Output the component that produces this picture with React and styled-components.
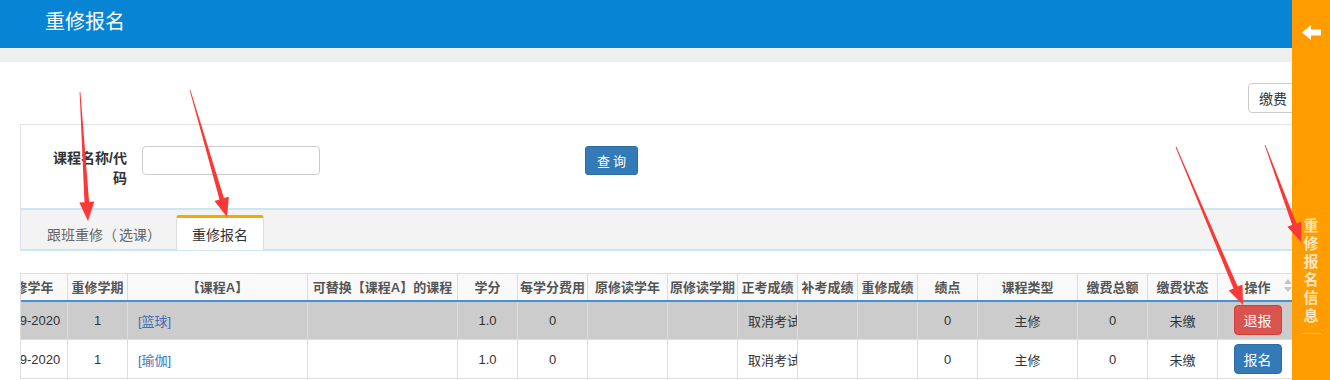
import React, { useLayoutEffect, useRef } from "react";
import styled, { createGlobalStyle } from "styled-components";

const FONT = `"Liberation Sans", "Noto Sans CJK SC", sans-serif`;

const GlobalStyle = createGlobalStyle`
  html, body { margin: 0; padding: 0; background: #fff; overflow: hidden; }
  body { font-family: ${FONT}; color: #333; font-size: 13px; }
  * { box-sizing: border-box; }
`;

const Page = styled.div`
  position: relative;
  width: 1330px;
  height: 380px;
  overflow: hidden;
`;

const TopBar = styled.header`
  height: 48px;
  background: #0784d4;
  padding-left: 45px;
`;

const Title = styled.h1`
  margin: 0;
  font-size: 20px;
  font-weight: normal;
  line-height: 45px;
  color: #fff;
`;

const SubBar = styled.div`
  height: 14px;
  background: #efefef;
`;

const Content = styled.main`
  padding: 0 20px;
`;

const Toolbar = styled.div`
  display: flex;
  justify-content: flex-end;
  padding: 21px 12px 0 0;
  margin-bottom: 11px;
`;

const PayButton = styled.button`
  height: 30px;
  padding: 0 10px;
  border: 1px solid #ccc;
  border-radius: 4px;
  background: #fff;
  color: #333;
  font-family: ${FONT};
  font-size: 14px;
`;

const SearchPanel = styled.section`
  height: 84px;
  border: 1px solid #e3e3e3;
  border-bottom: none;
  padding: 21px 0 0 0;
  display: flex;
  align-items: flex-start;
`;

const FieldLabel = styled.label`
  width: 76px;
  margin-left: 30px;
  padding-top: 2px;
  text-align: right;
  font-size: 14px;
  font-weight: bold;
  line-height: 20px;
  color: #333;
`;

const TextInput = styled.input`
  width: 178px;
  height: 29px;
  margin-left: 15px;
  border: 1px solid #ccc;
  border-radius: 4px;
  background: #fff;
`;

const QueryButton = styled.button`
  width: 53px;
  height: 29px;
  margin-left: 265px;
  border: 1px solid #2e6da4;
  border-radius: 3px;
  background: #337ab7;
  color: #fff;
  font-family: ${FONT};
  font-size: 13px;
  letter-spacing: 3px;
  padding: 0 0 0 3px;
`;

const TabBar = styled.nav`
  height: 43px;
  background: #f3f3f3;
  border-top: 2px solid #cbe7f1;
  border-bottom: 2px solid #cbe7f1;
  border-left: 1px solid #dde;
  display: flex;
  align-items: flex-end;
  padding-left: 10px;
  margin-bottom: -2px;
`;

const Tab = styled.div`
  height: 35px;
  padding: 0 ${(p) => (p.$active ? "15px" : "12px")} 0 15px;
  display: flex;
  align-items: center;
  font-size: 14px;
  color: ${(p) => (p.$active ? "#333" : "#666")};
  background: ${(p) => (p.$active ? "#fff" : "transparent")};
  border: 1px solid ${(p) => (p.$active ? "#ddd" : "transparent")};
  border-top: 3px solid ${(p) => (p.$active ? "#f0ab00" : "transparent")};
  border-bottom: none;
  border-radius: 3px 3px 0 0;
  position: relative;
  top: 1px;
`;

const Paren = styled.span`
  letter-spacing: 2px;
`;

const TableWrap = styled.div`
  margin-top: 24px;
  overflow: hidden;
  border-left: 1px solid #ddd;
`;

const Table = styled.table`
  border-collapse: collapse;
  table-layout: fixed;
  width: 1330px;
`;

const HeadCell = styled.th`
  position: relative;
  height: 27px;
  padding: 0 2px;
  background: #f9f9f9;
  border: 1px solid #ddd;
  border-bottom: 2px solid #4791d6;
  color: #555;
  font-size: 13px;
  font-weight: bold;
  white-space: nowrap;
  overflow: hidden;
  text-align: center;
  ${(p) => (p.$blank ? "border-right: none; border-top-color: transparent;" : "")}
`;

const Row = styled.tr`
  background: ${(p) => (p.$selected ? "#cccccc" : "#fff")};
`;

const Cell = styled.td`
  height: 39px;
  padding: 0 10px;
  border: 1px solid #ddd;
  font-size: 13px;
  color: #333;
  white-space: nowrap;
  overflow: hidden;
  text-align: ${(p) => (p.$left ? "left" : "center")};
`;

const CourseLink = styled.a`
  color: #3f6fb5;
  text-decoration: none;
  font-size: 13px;
`;

const ActionButton = styled.button`
  width: 48px;
  height: 30px;
  padding: 0;
  border-radius: 4px;
  border: 1px solid ${(p) => (p.$danger ? "#d43f3a" : "#2e6da4")};
  background: ${(p) => (p.$danger ? "#d9534f" : "#337ab7")};
  color: #fff;
  font-family: ${FONT};
  font-size: 14px;
  vertical-align: middle;
`;

const SortIcon = styled.span`
  position: absolute;
  right: 5px;
  top: 5px;
  display: flex;
  flex-direction: column;
  gap: 3px;
  &::before,
  &::after {
    content: "";
    width: 0;
    height: 0;
    border-left: 4px solid transparent;
    border-right: 4px solid transparent;
  }
  &::before { border-bottom: 5px solid #c4c4c4; }
  &::after { border-top: 5px solid #c4c4c4; }
`;

const SideTab = styled.aside`
  position: absolute;
  top: 0;
  right: 0;
  width: 38px;
  height: 380px;
  background: #ff9c00;
  display: flex;
  flex-direction: column;
  align-items: center;
  z-index: 5;
`;

const BackIcon = styled.svg`
  margin-top: 25px;
  display: block;
`;

const SideText = styled.div`
  margin-top: 176px;
  width: 16px;
  font-family: "Noto Sans CJK SC", sans-serif;
  font-size: 15px;
  font-weight: bold;
  line-height: 18px;
  color: #ffe6bf;
  text-align: center;
  word-break: break-all;
`;

const SideRule = styled.div`
  margin-top: 9px;
  width: 20px;
  height: 1px;
  background: #ffc250;
`;

const Annotations = styled.svg`
  position: absolute;
  left: 0;
  top: 0;
  pointer-events: none;
  z-index: 10;
`;

const columns = [
  { label: "重修学年", w: 80 },
  { label: "重修学期", w: 60 },
  { label: "【课程A】", w: 180 },
  { label: "可替换【课程A】的课程", w: 150 },
  { label: "学分", w: 60 },
  { label: "每学分费用", w: 70 },
  { label: "原修读学年", w: 80 },
  { label: "原修读学期", w: 70 },
  { label: "正考成绩", w: 60 },
  { label: "补考成绩", w: 60 },
  { label: "重修成绩", w: 60 },
  { label: "绩点", w: 60 },
  { label: "课程类型", w: 100 },
  { label: "缴费总额", w: 70 },
  { label: "缴费状态", w: 70 },
  { label: "操作", w: 80 },
  { label: "", w: 20 },
];

const rows = [
  { year: "2019-2020", term: "1", course: "[篮球]", credit: "1.0", fee: "0", exam: "取消考试", gpa: "0", type: "主修", total: "0", status: "未缴", action: "退报", danger: true, selected: true },
  { year: "2019-2020", term: "1", course: "[瑜伽]", credit: "1.0", fee: "0", exam: "取消考试", gpa: "0", type: "主修", total: "0", status: "未缴", action: "报名", danger: false, selected: false },
];

const arrows = [
  { x1: 80, y1: 92, x2: 88, y2: 221 },
  { x1: 190, y1: 90, x2: 227, y2: 217 },
  { x1: 1176, y1: 147, x2: 1243, y2: 305 },
  { x1: 1265, y1: 145, x2: 1301, y2: 242 },
];

function arrowPoints({ x1, y1, x2, y2 }) {
  const dx = x2 - x1;
  const dy = y2 - y1;
  const L = Math.hypot(dx, dy);
  const ux = dx / L;
  const uy = dy / L;
  const nx = -uy;
  const ny = ux;
  const bx = x2 - ux * 19;
  const by = y2 - uy * 19;
  const p = (x, y) => `${x.toFixed(1)},${y.toFixed(1)}`;
  return [
    p(x1 + nx * 0.4, y1 + ny * 0.4),
    p(bx + nx * 2.3, by + ny * 2.3),
    p(bx + nx * 7.5, by + ny * 7.5),
    p(x2, y2),
    p(bx - nx * 7.5, by - ny * 7.5),
    p(bx - nx * 2.3, by - ny * 2.3),
    p(x1 - nx * 0.4, y1 - ny * 0.4),
  ].join(" ");
}

export default function App() {
  const wrapRef = useRef(null);
  useLayoutEffect(() => {
    if (wrapRef.current) wrapRef.current.scrollLeft = 34;
  }, []);

  return (
    <Page>
      <GlobalStyle />
      <TopBar>
        <Title>重修报名</Title>
      </TopBar>
      <SubBar />
      <Content>
        <Toolbar>
          <PayButton>缴费</PayButton>
        </Toolbar>
        <SearchPanel>
          <FieldLabel>课程名称/代码</FieldLabel>
          <TextInput type="text" />
          <QueryButton>查询</QueryButton>
        </SearchPanel>
        <TabBar>
          <Tab>
            跟班重修<Paren>（</Paren>选课<Paren>）</Paren>
          </Tab>
          <Tab $active>重修报名</Tab>
        </TabBar>
        <TableWrap ref={wrapRef}>
          <Table>
            <colgroup>
              {columns.map((c, i) => (
                <col key={i} style={{ width: c.w }} />
              ))}
            </colgroup>
            <thead>
              <tr>
                {columns.map((c, i) => (
                  <HeadCell key={i} $blank={c.label === ""}>
                    {c.label}
                    {c.label === "操作" && <SortIcon />}
                  </HeadCell>
                ))}
              </tr>
            </thead>
            <tbody>
              {rows.map((r, i) => (
                <Row key={i} $selected={r.selected}>
                  <Cell>{r.year}</Cell>
                  <Cell>{r.term}</Cell>
                  <Cell $left>
                    <CourseLink href="#">{r.course}</CourseLink>
                  </Cell>
                  <Cell />
                  <Cell>{r.credit}</Cell>
                  <Cell>{r.fee}</Cell>
                  <Cell />
                  <Cell />
                  <Cell>{r.exam}</Cell>
                  <Cell />
                  <Cell />
                  <Cell>{r.gpa}</Cell>
                  <Cell>{r.type}</Cell>
                  <Cell>{r.total}</Cell>
                  <Cell>{r.status}</Cell>
                  <Cell>
                    <ActionButton $danger={r.danger}>{r.action}</ActionButton>
                  </Cell>
                  <Cell />
                </Row>
              ))}
            </tbody>
          </Table>
        </TableWrap>
      </Content>
      <SideTab>
        <BackIcon width="19" height="15" viewBox="0 0 19 15">
          <polygon points="0,7.5 9,0 9,4.5 19,4.5 19,10.5 9,10.5 9,15" fill="#fff" />
        </BackIcon>
        <SideText>重修报名信息</SideText>
        <SideRule />
      </SideTab>
      <Annotations width="1330" height="380" viewBox="0 0 1330 380">
        {arrows.map((a, i) => (
          <polygon key={i} points={arrowPoints(a)} fill="#fb3838" />
        ))}
      </Annotations>
    </Page>
  );
}
